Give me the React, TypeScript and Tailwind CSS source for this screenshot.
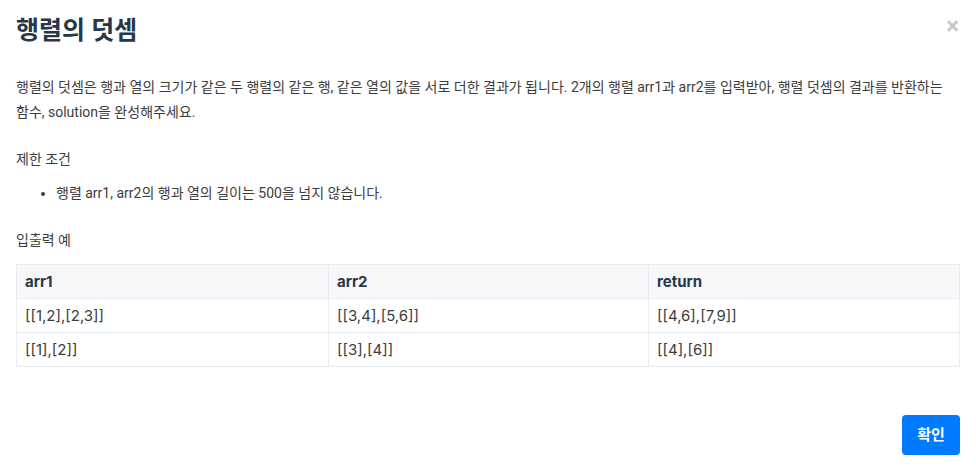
import React from 'react';

const rows = [
  ['[[1,2],[2,3]]', '[[3,4],[5,6]]', '[[4,6],[7,9]]'],
  ['[[1],[2]]', '[[3],[4]]', '[[4],[6]]'],
];

const App = () => {
  return (
    <div
      className="relative w-[976px] h-[467px] bg-white text-[#333] px-4 pt-[15px]"
      style={{ fontFamily: 'Roboto, "Noto Sans CJK KR", sans-serif' }}
    >
      {/* Header */}
      <h1 className="text-[25px] leading-[32px] font-bold text-[#263747]">행렬의 덧셈</h1>
      <button className="absolute right-[17px] top-[15px] text-[#c8c8c8] text-[24px] leading-[22px] font-bold">
        ×
      </button>

      {/* Body */}
      <div className="text-[14px] leading-[25px] text-[#3c3c3c]">
        <p className="mt-[28px] break-keep">
          행렬의 덧셈은 행과 열의 크기가 같은 두 행렬의 같은 행, 같은 열의 값을 서로 더한 결과가 됩니다. 2개의 행렬 arr1과 arr2를 입력받아, 행렬 덧셈의 결과를 반환하는
          함수, solution을 완성해주세요.
        </p>

        <p className="mt-[22px]">제한 조건</p>
        <ul className="mt-[9px] pl-[40px] list-disc">
          <li>행렬 arr1, arr2의 행과 열의 길이는 500을 넘지 않습니다.</li>
        </ul>

        <p className="mt-[22px]">입출력 예</p>

        <div
          className="mt-[11px] w-[944px] border border-[#e9ecf3] text-[15px]"
          style={{ fontFamily: 'Inter, "Noto Sans CJK KR", sans-serif' }}
        >
          <div className="grid grid-cols-[311px_320px_1fr] bg-[#f8f8fb] font-bold text-[#263747]">
            <div className="px-2 h-[33px] flex items-center">arr1</div>
            <div className="px-2 h-[33px] flex items-center border-l border-[#e9ecf3]">arr2</div>
            <div className="px-2 h-[33px] flex items-center border-l border-[#e9ecf3]">return</div>
          </div>
          {rows.map((r, i) => (
            <div key={i} className="grid grid-cols-[311px_320px_1fr] border-t border-[#e9ecf3] text-[#3c3c3c]">
              <div className="px-2 h-[33px] flex items-center">{r[0]}</div>
              <div className="px-2 h-[33px] flex items-center border-l border-[#e9ecf3]">{r[1]}</div>
              <div className="px-2 h-[33px] flex items-center border-l border-[#e9ecf3]">{r[2]}</div>
            </div>
          ))}
        </div>
      </div>

      {/* Footer */}
      <div className="absolute right-4 bottom-[12px]">
        <button className="bg-[#007bff] text-white text-[15px] font-bold rounded-[4px] w-[58px] h-[40px]">
          확인
        </button>
      </div>
    </div>
  );
};

export default App;
